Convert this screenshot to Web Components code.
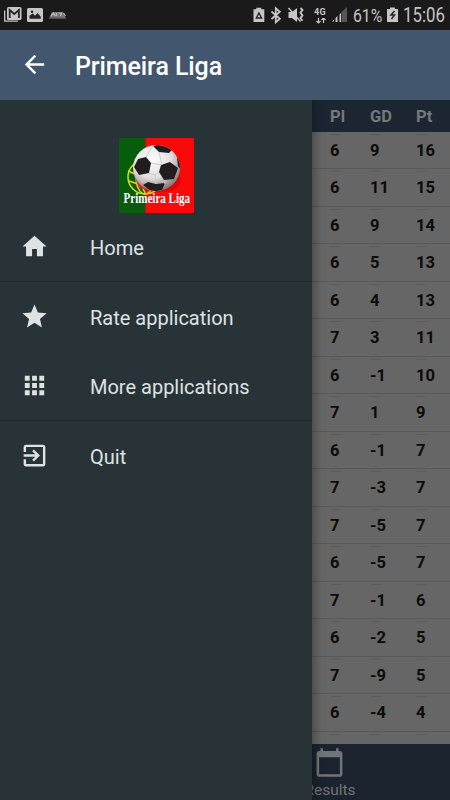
<!DOCTYPE html>
<html lang="en">
<head>
<meta charset="utf-8">
<title>Primeira Liga</title>
<style>
  body {
    margin: 0;
    background: #666;
    font-family: Roboto, "Liberation Sans", sans-serif;
  }
</style>
</head>
<body>
<liga-app></liga-app>

<script>
const define = (name, html, setup) => {
  const template = document.createElement('template');
  template.innerHTML = html;

  customElements.define(name, class extends HTMLElement {
    constructor() {
      super();
      this.attachShadow({ mode: 'open' });
      this.shadowRoot.appendChild(template.content.cloneNode(true));
    }

    connectedCallback() {
      if (setup) setup(this, this.shadowRoot);
    }
  });
};

const icons = {
  back: '<path d="M20 11H7.83l5.59-5.59L12 4l-8 8 8 8 1.41-1.41L7.83 13H20v-2z"/>',
  home: '<path d="M10 20v-6h4v6h5v-8h3L12 3 2 12h3v8z"/>',
  star: '<path d="M12 17.27L18.18 21l-1.64-7.03L22 9.24l-7.19-.61L12 2 9.19 8.63 2 9.24l5.46 4.73L5.82 21z"/>',
  apps: '<path d="M4 8h4V4H4v4zm6 12h4v-4h-4v4zm-6 0h4v-4H4v4zm0-6h4v-4H4v4zm6 0h4v-4h-4v4zm6-10v4h4V4h-4zm-6 4h4V4h-4v4zm6 6h4v-4h-4v4zm0 6h4v-4h-4v4z"/>',
  exit: '<path d="M10.09 15.59L11.5 17l5-5-5-5-1.41 1.41L12.67 11H3v2h9.67l-2.58 2.59zM19 3H5c-1.11 0-2 .9-2 2v4h2V5h14v14H5v-4H3v4c0 1.1.89 2 2 2h14c1.1 0 2-.9 2-2V5c0-1.1-.9-2-2-2z"/>',
  calendar: '<path d="M20 3h-1V1h-2v2H7V1H5v2H4c-1.1 0-2 .9-2 2v16c0 1.1.9 2 2 2h16c1.1 0 2-.9 2-2V5c0-1.1-.9-2-2-2zm0 18H4V8h16v13z"/>'
};

define('md-icon', `
  <style>
    :host { display: block; flex: none; width: 29px; height: 29px; }
    svg { display: block; width: 100%; height: 100%; fill: currentColor; }
  </style>
  <svg viewBox="0 0 24 24"></svg>
`, (el, root) => {
  root.querySelector('svg').innerHTML = icons[el.getAttribute('name')];
});

define('status-bar', `
  <style>
    :host { display: flex; height: 30px; background: #1a1a1a; color: #c6c6c6; overflow: hidden; }
    :host > *, svg, div { flex: none; }
    svg { display: block; }
    .percent { width: 33px; font-size: 19px; line-height: 31px; white-space: nowrap; }
    .percent span, .time span { display: inline-block; transform-origin: 0 50%; }
    .percent span { transform: scaleX(.83); }
    .net { width: 17px; padding-top: 8px; font-size: 9px; line-height: 9px; font-weight: 700; letter-spacing: .3px; }
    .net svg { margin: 1px 0 0 2px; }
    .time { width: 47px; padding-left: 3px; font-size: 20.5px; line-height: 31px; white-space: nowrap; }
    .time span { transform: scaleX(.82); }
  </style>
  <svg width="252" height="30" viewBox="0 0 252 30">
    <path d="M4.7 10.5v10.7h13.2" fill="none" stroke="#c6c6c6" stroke-width="1.3"/>
    <rect x="7" y="7" width="14.5" height="13" rx="1.5" fill="#c6c6c6"/>
    <path d="M9.7 18V10l4.6 4 4.6-4v8" fill="none" stroke="#252525" stroke-width="1.8"/>
    <rect x="27" y="8" width="16" height="14" rx="1.5" fill="#c6c6c6"/>
    <path d="M29.5 18.7v-3l3.2-2.3 2.3 2.3 2.6-2.6 3.2 3.7v1.9z" fill="#222"/>
    <circle cx="32" cy="11.7" r="1.2" fill="#222"/>
    <path d="M52 12h11l3 6.5H49z" fill="#777"/>
    <path d="M51 16l2.5-3 2 3m1-3v3m2-3h3l-1 3m3-3 2 3" fill="none" stroke="#bbb" stroke-width="1.2"/>
    <path d="M50 18h15" stroke="#555"/>
  </svg>
  <svg width="62" height="30" viewBox="252 0 62 30" fill="#c6c6c6">
    <path d="M253.500 9.200h2.800V7.700h5V9.200h3V22h-10.800z"/>
    <path d="M256.300 18l2.600-5 2.700 5z" fill="none" stroke="#222" stroke-width="1.300"/>
    <path d="M271.500 11.500l8.300 7.200-4 3.600V8.200l4 3.600-8.300 7.200" fill="none" stroke="#c6c6c6" stroke-width="1.800"/>
    <path d="M288.500 12h3.500l5-4v14l-5-4h-3.500z"/>
    <path d="M288.500 8l12 13.500" stroke="#c6c6c6" stroke-width="1.500"/>
    <path d="M300.500 8l2 2-2 2.700 2 2.700-2 2.700 2 2.700" fill="none" stroke="#c6c6c6" stroke-width="1.800"/>
  </svg>
  <div class="net">4G<svg width="10" height="6"><path d="M2.500 0v5M.5 3l2 2 2-2M7.500 5V0m-2 2 2-2 2 2" fill="none" stroke="#c6c6c6" stroke-width="1.200"/></svg></div>
  <svg width="22" height="30" viewBox="331 0 22 30">
    <path d="M332 21.500h2v-2zM335.500 22h2v-6l-2 2zM339.500 22h1.500v-9l-1.500 1.500z" fill="#c6c6c6"/>
    <path d="M341.500 22V12l5.500-5v15z" fill="#555"/>
  </svg>
  <div class="percent"><span>61%</span></div>
  <svg width="14" height="30" viewBox="386 0 14 30">
    <path d="M387 9h3V7.500h5V9h3v13h-11z" fill="#c6c6c6"/>
    <path d="M394.500 11l-3.500 4h3.500l-3 4" fill="none" stroke="#252525" stroke-width="1.500"/>
  </svg>
  <div class="time"><span>15:06</span></div>
`);

define('app-toolbar', `
  <style>
    :host {
      display: flex;
      align-items: center;
      box-sizing: border-box;
      height: 70px;
      padding: 2px 20px 0;
      background: #42566d;
      color: #fff;
    }
    md-icon { margin-top: -3px; }
    h1 { margin: 2px 0 0 26px; font-size: 25px; font-weight: 500; line-height: 30px; letter-spacing: -.1px; }
  </style>
  <md-icon name="back"></md-icon>
  <h1><slot></slot></h1>
`);

define('liga-logo', `
  <style>
    :host { display: block; width: 75px; height: 75px; }
    svg { display: block; overflow: visible; }
    text { font: bold 12.5px "Liberation Serif", serif; fill: #fff; }
  </style>
  <svg width="75" height="75" viewBox="0 0 75 75">
    <defs>
      <radialGradient id="ball" cx=".4" cy=".3" r=".7">
        <stop offset="0" stop-color="#fff"/>
        <stop offset=".6" stop-color="#e2dfe0"/>
        <stop offset="1" stop-color="#8b7778"/>
      </radialGradient>
      <clipPath id="round"><ellipse cx="37.500" cy="30" rx="23.500" ry="23"/></clipPath>
    </defs>
    <path d="M0 0h75v75H0z" fill="#f90909"/>
    <path d="M0 0h26.500v75H0z" fill="#075d0b"/>
    <g fill="none" stroke="#d8dc16" stroke-width="1.500">
      <circle cx="26" cy="39" r="17"/>
      <ellipse cx="26" cy="39" rx="9" ry="17"/>
      <path d="M9 33l30 13M10 43l27 9M14 28l12 27"/>
    </g>
    <path d="M16 40l4 10 15 3-4-11z" fill="#e32323"/>
    <ellipse cx="43" cy="42" rx="19" ry="12" fill="#a80000" opacity=".35"/>
    <ellipse cx="37.500" cy="30" rx="23.500" ry="23" fill="url(#ball)"/>
    <g clip-path="url(#round)">
      <path d="M34 8l8-2 12 5-4 4-10-1z" fill="#211d1e"/>
      <path d="M19 21l8-2 5 6-2 10-10 2-5-8z" fill="#211d1e"/>
      <path d="M42 27l9-3 8 6-4 11-10 1-5-8z" fill="#211d1e"/>
      <path d="M24 47l5-3 8 2 9-1-3 7-10 2z" fill="#211d1e"/>
      <path d="M58 20l5 2v11l-4-5z" fill="#211d1e"/>
      <path d="M27 19l7-11M40 14l3 13M32 25l10 2M30 35l6 2 4-3M36 37l1 9M20 37l4 8M45 42l1 4M51 24l7-4" stroke="#d0cacb" fill="none"/>
    </g>
    <text transform="translate(4.500 65) scale(.885 1.150)">Primeira Liga</text>
  </svg>
`);

define('menu-item', `
  <style>
    :host {
      display: flex;
      align-items: center;
      box-sizing: border-box;
      height: 69px;
      padding-left: 20px;
      color: #dfe2e3;
      font-size: 20px;
    }
    :host([divided]) { border-bottom: 1px solid #1f292e; height: 70px; }
    span { margin: 2px 0 0 41px; line-height: 24px; }
  </style>
  <md-icon></md-icon>
  <span><slot></slot></span>
`, (el, root) => {
  const icon = document.createElement('md-icon');
  icon.setAttribute('name', el.getAttribute('icon'));
  root.querySelector('md-icon').replaceWith(icon);
});

define('side-drawer', `
  <style>
    :host {
      display: flow-root;
      width: 312px;
      background: #283338;
      box-shadow: 0 0 12px rgba(0, 0, 0, .45);
    }
    liga-logo { margin: 37.5px 0 -.5px 119px; }
  </style>
  <liga-logo></liga-logo>
  <slot></slot>
`);

define('league-table', `
  <style>
    :host { display: block; height: 644px; overflow: hidden; background: #666; color: #0b0b0b; }
    .row {
      display: grid;
      grid-template-columns: 40px 46px 34px;
      box-sizing: border-box;
      height: 37.5px;
      padding-left: 330px;
      border-bottom: 1px solid #595959;
      font-size: 16.5px;
      font-weight: 700;
      line-height: 38.4px;
    }
    .row span { background: linear-gradient(#5c5c5c, #5c5c5c) -1px 2px / 12px 1px no-repeat; }
    .head { height: 31.5px; line-height: 33px; background: #1b2632; color: #777879; border: 0; }
    .head span { background: none; }
  </style>
`, (el, root) => {
  const rows = [
    [6, 9, 16], [6, 11, 15], [6, 9, 14], [6, 5, 13], [6, 4, 13], [7, 3, 11],
    [6, -1, 10], [7, 1, 9], [6, -1, 7], [7, -3, 7], [7, -5, 7], [6, -5, 7],
    [7, -1, 6], [6, -2, 5], [7, -9, 5], [6, -4, 4], ['', '', '']
  ];
  const addRow = (cells, className) => {
    const row = document.createElement('div');
    row.className = className;
    row.innerHTML = cells.map(cell => `<span>${cell}</span>`).join('');
    root.appendChild(row);
  };
  addRow(['Pl', 'GD', 'Pt'], 'row head');
  rows.forEach(cells => addRow(cells, 'row'));
});

define('bottom-tab', `
  <style>
    :host {
      display: flex;
      flex-direction: column;
      align-items: center;
      box-sizing: border-box;
      height: 56px;
      padding: 3px 0 0 210px;
      background: #1a232e;
      color: #717478;
      font-size: 15.5px;
      line-height: 18px;
    }
    md-icon { width: 31px; height: 31px; margin: 0 1px 3px 0; }
  </style>
  <md-icon name="calendar"></md-icon>
  <span><slot></slot></span>
`);

define('liga-app', `
  <style>
    :host { display: block; width: 450px; height: 800px; overflow: hidden; }
    .body { display: grid; grid-template: 700px / 450px; overflow: hidden; }
    main, side-drawer { grid-area: 1 / 1; }
  </style>
  <status-bar></status-bar>
  <app-toolbar>Primeira Liga</app-toolbar>
  <div class="body">
    <main>
      <league-table></league-table>
      <bottom-tab>Results</bottom-tab>
    </main>
    <side-drawer>
      <menu-item icon="home" divided>Home</menu-item>
      <menu-item icon="star">Rate application</menu-item>
      <menu-item icon="apps" divided>More applications</menu-item>
      <menu-item icon="exit">Quit</menu-item>
    </side-drawer>
  </div>
`);
</script>
</body>
</html>
